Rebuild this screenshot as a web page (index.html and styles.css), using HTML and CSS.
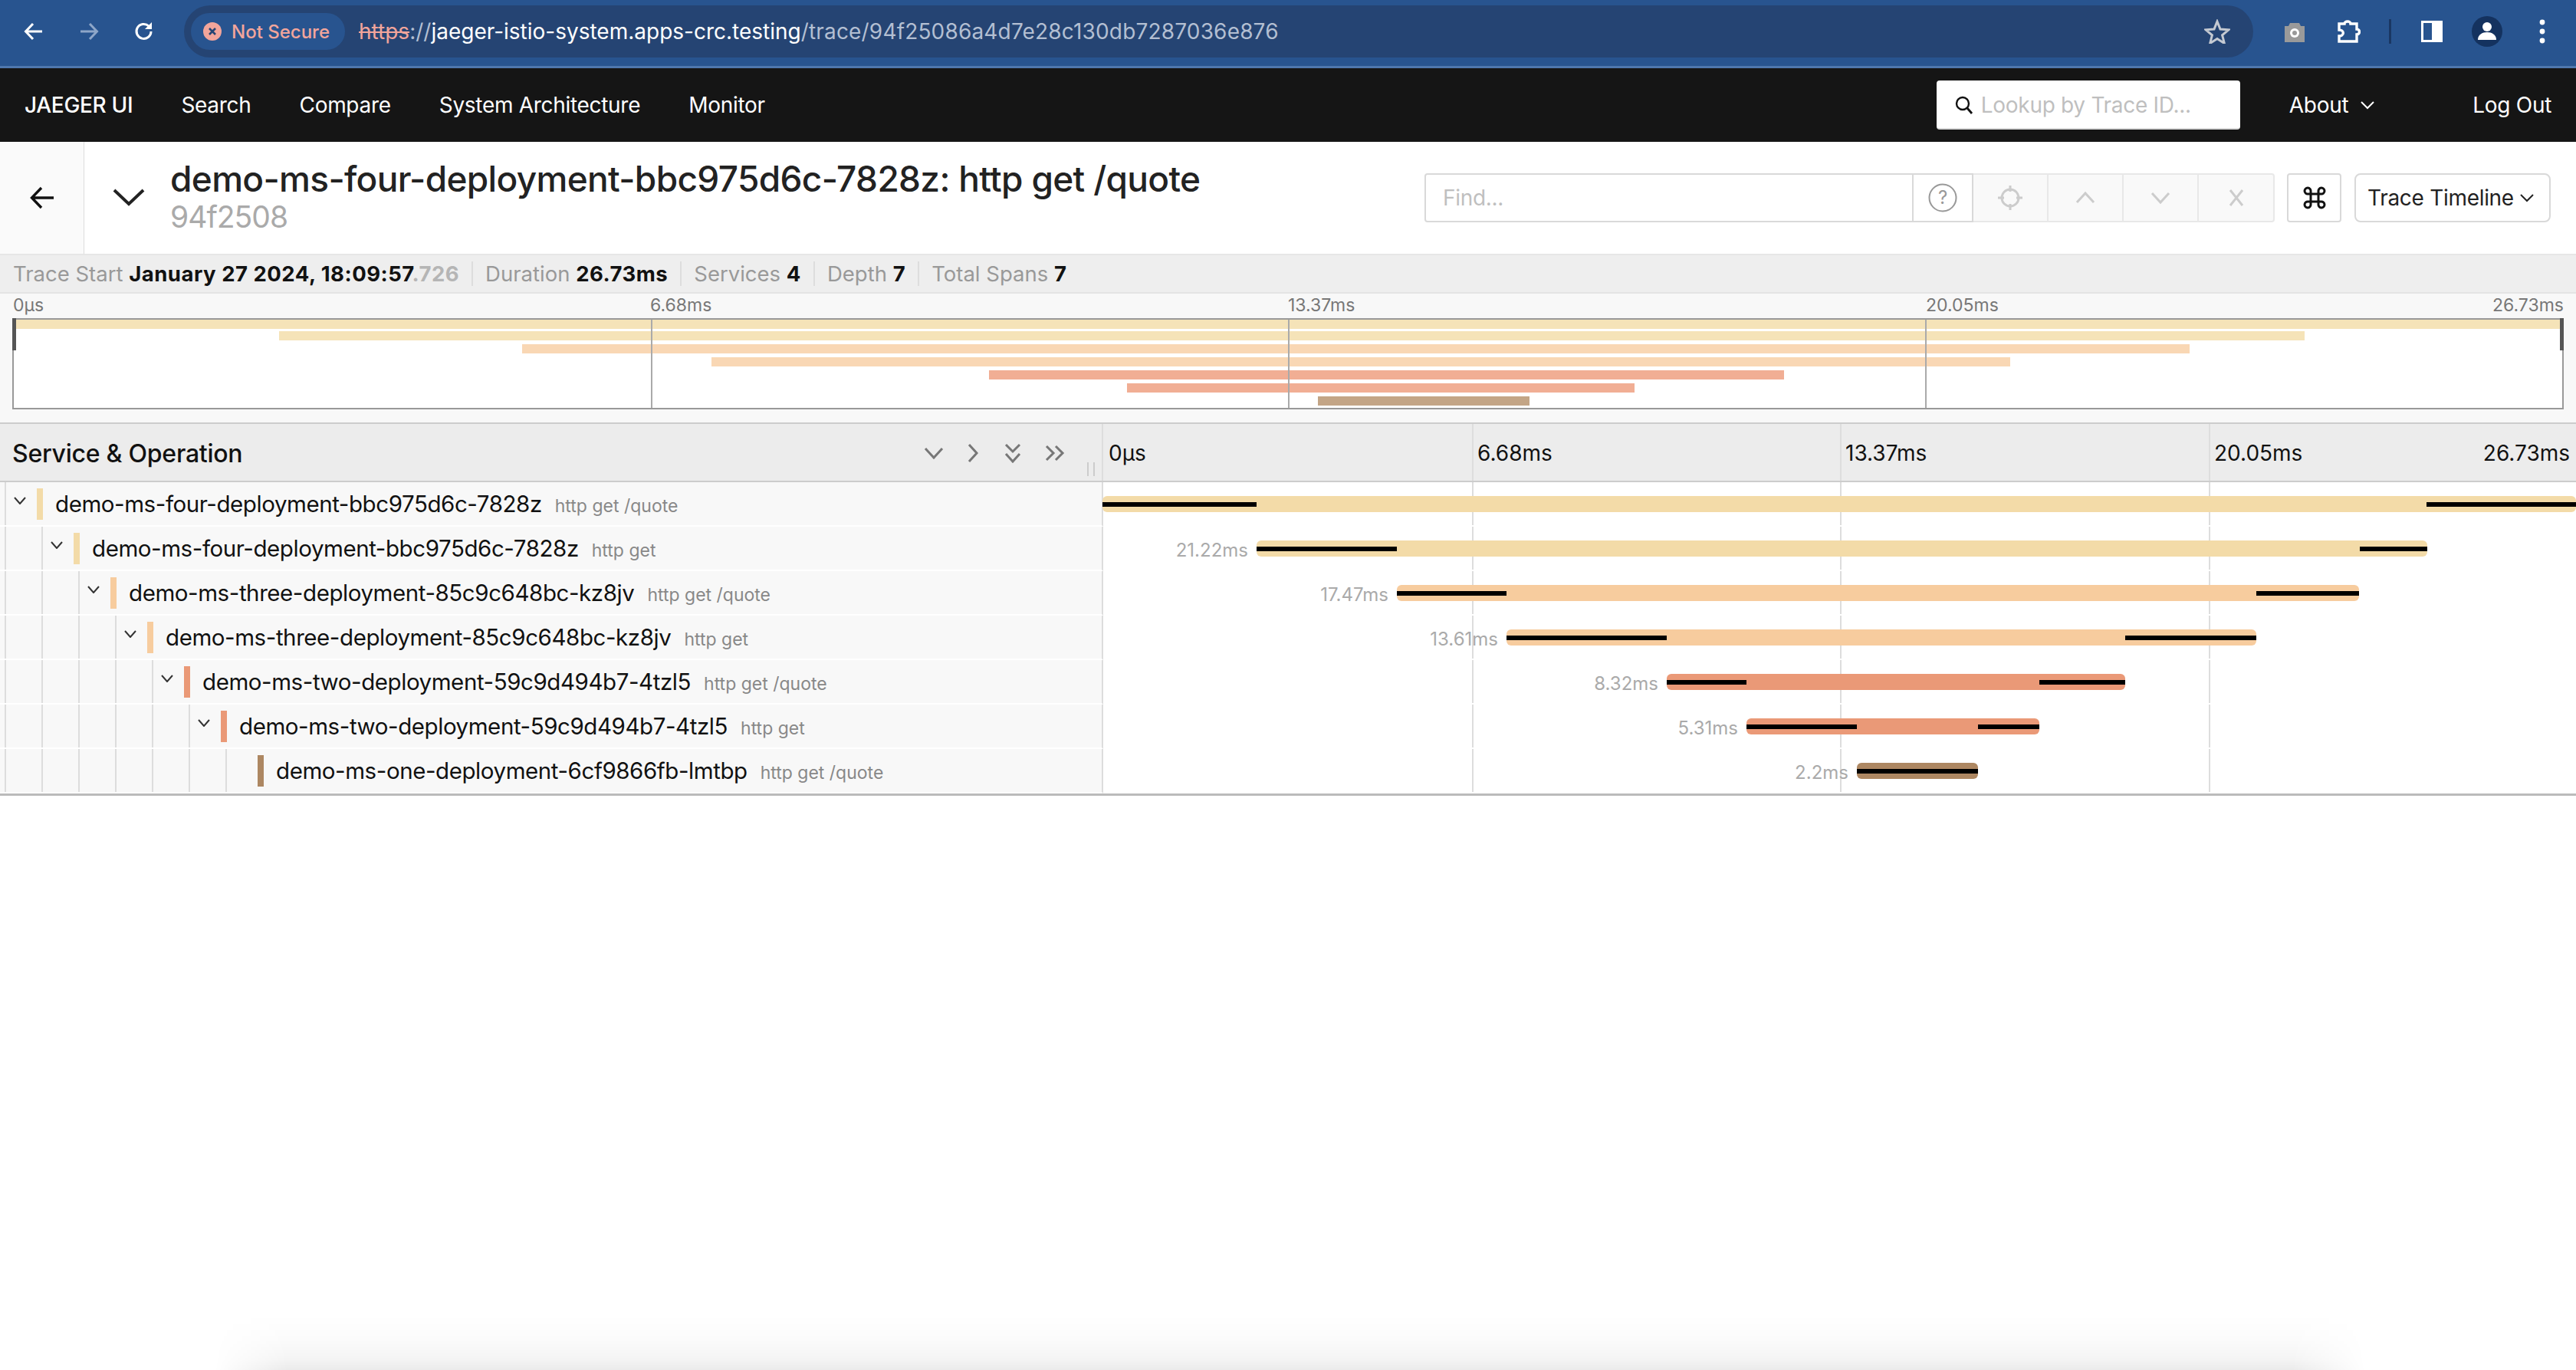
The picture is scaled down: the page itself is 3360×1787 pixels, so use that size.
FILE: index.html
```html
<!DOCTYPE html>
<html lang="en">
<head>
<meta charset="utf-8">
<title>Jaeger UI</title>
<link rel="stylesheet" href="styles.css">
</head>
<body>
<div class="browser">
  <svg class="ci ci-nav" viewBox="0 0 28 28"><path d="M25 14H4M13 4L3.500 14l9.500 10" fill="none" stroke="#fff" stroke-width="3"/></svg>
  <svg class="ci ci-nav dim" viewBox="0 0 28 28"><path d="M3 14h21M15 4l9.500 10L15 24" fill="none" stroke="#8ea6c8" stroke-width="3"/></svg>
  <svg class="ci ci-nav" viewBox="0 0 28 28"><path d="M23 14a9.500 9.500 0 1 1-3-7" fill="none" stroke="#fff" stroke-width="3"/><path d="M24 2v9h-9z" fill="#fff"/></svg>
  <div class="omni">
    <div class="pill">
      <svg class="warn" viewBox="0 0 24 24"><circle cx="12" cy="12" r="12" fill="#f2a59b"/><path d="M8 8l8 8M16 8l-8 8" stroke="#254473" stroke-width="2.600"/></svg>
      <span>Not Secure</span>
    </div>
    <div class="url"><span class="https">https</span><span class="urlgray">://</span><span class="host">jaeger-istio-system.apps-crc.testing</span><span class="urlgray urlpath">/trace/94f25086a4d7e28c130db7287036e876</span></div>
    <svg class="star" viewBox="0 0 34 32"><path d="M17 3l4 10 11 .8-8.400 7 2.700 10.700L17 25.600 7.700 31.500l2.700-10.700L2 13.800 13 13z" fill="none" stroke="#c4c9d1" stroke-width="3"/></svg>
  </div>
  <div class="ext">
    <svg class="i-cam" viewBox="0 0 30 28"><path d="M9 3h12l2 4h5v21H2V7h5z" fill="#9a9a9a"/><circle cx="15" cy="16" r="6" fill="#fff"/><circle cx="15" cy="16" r="3" fill="#9a9a9a"/></svg>
    <svg class="i-puz" viewBox="0 0 32 30"><path d="M4 5h7a4 3 0 0 1 8 0h8v7a3 3 0 0 1 0 7v9H4v-7a4 3 0 0 0 0-8z" fill="none" stroke="#fff" stroke-width="3.400"/></svg>
    <span class="divider"></span>
    <svg class="i-side" viewBox="0 0 28 28"><rect x="1.500" y="1.500" width="25" height="25" fill="none" stroke="#fff" stroke-width="3"/><rect x="14" y="1" width="13" height="26" fill="#fff"/></svg>
    <svg class="i-user" viewBox="0 0 40 40"><circle cx="20" cy="20" r="20" fill="#14325f"/><circle cx="20" cy="14" r="6" fill="#fff"/><path d="M8 31c0-7 6-10 12-10s12 3 12 10z" fill="#fff"/></svg>
    <svg class="i-dots" viewBox="0 0 8 32"><circle cx="4" cy="4" r="3.400" fill="#fff"/><circle cx="4" cy="16" r="3.400" fill="#fff"/><circle cx="4" cy="28" r="3.400" fill="#fff"/></svg>
  </div>
</div>

<nav class="topnav">
  <a class="brand">JAEGER UI</a>
  <a>Search</a>
  <a>Compare</a>
  <a>System Architecture</a>
  <a>Monitor</a>
  <div class="lookup">
    <svg class="mag" viewBox="0 0 24 24"><circle cx="10" cy="10" r="8" fill="none" stroke="#111" stroke-width="2.400"/><path d="M16 16l6 7" stroke="#111" stroke-width="2.800"/></svg>
    <span>Lookup by Trace ID...</span>
  </div>
  <a class="about">About <svg class="nav-chev" viewBox="0 0 18 12"><path d="M1 2l8 8 8-8" fill="none" stroke="#fff" stroke-width="2"/></svg></a>
  <a class="logout">Log Out</a>
</nav>

<header class="tracehead">
  <div class="backcell"><svg class="backarrow" viewBox="0 0 32 30"><path d="M31 15H3M15 2L2.500 15 15 28" fill="none" stroke="#111" stroke-width="3.400"/></svg></div>
  <svg class="collapse" viewBox="0 0 42 24"><path d="M2 3l19 18L40 3" fill="none" stroke="#222" stroke-width="4"/></svg>
  <div class="titles">
    <h1>demo-ms-four-deployment-bbc975d6c-7828z: http get /quote</h1>
    <div class="traceid">94f2508</div>
  </div>
  <div class="tools">
    <div class="find">
      <span class="find-ph">Find...</span>
      <span class="help"><svg viewBox="0 0 38 38"><circle cx="19" cy="19" r="17.500" fill="none" stroke="#999" stroke-width="2"/><text x="19" y="27" text-anchor="middle" class="q">?</text></svg></span>
    </div>
    <div class="btngroup">
      <span class="tb"><svg viewBox="0 0 34 34"><circle cx="17" cy="17" r="11" fill="none" stroke="#ccc" stroke-width="3"/><path d="M17 1v8M17 25v8M1 17h8M25 17h8" stroke="#ccc" stroke-width="3"/></svg></span>
      <span class="tb"><svg viewBox="0 0 34 34"><path d="M6 23L17 11l11 12" fill="none" stroke="#ccc" stroke-width="3"/></svg></span>
      <span class="tb"><svg viewBox="0 0 34 34"><path d="M6 11l11 12 11-12" fill="none" stroke="#ccc" stroke-width="3"/></svg></span>
      <span class="tb"><svg viewBox="0 0 34 34"><path d="M9 7l16 20M25 7L9 27" fill="none" stroke="#ccc" stroke-width="3"/></svg></span>
    </div>
    <span class="cmd"><svg viewBox="0 0 32 32"><path d="M11 11h10v10H11zM11 11H7.500A4 4 0 1 1 11 7.500zM21 11V7.500A4 4 0 1 1 24.500 11zM21 21h3.500a4 4 0 1 1-3.500 3.500zM11 21v3.500A4 4 0 1 1 7.500 21z" fill="none" stroke="#111" stroke-width="3"/></svg></span>
    <span class="viewbtn">Trace Timeline <svg viewBox="0 0 18 12"><path d="M1 2l8 8 8-8" fill="none" stroke="#222" stroke-width="2"/></svg></span>
  </div>
</header>

<section class="summary">
  <span class="sum"><i>Trace Start</i> <b>January 27 2024, 18:09:57</b><b class="ms">.726</b></span>
  <span class="sum"><i>Duration</i> <b>26.73ms</b></span>
  <span class="sum"><i>Services</i> <b>4</b></span>
  <span class="sum"><i>Depth</i> <b>7</b></span>
  <span class="sum"><i>Total Spans</i> <b>7</b></span>
</section>

<section class="overview">
  <div class="ov-labels"><span>0µs</span><span>6.68ms</span><span>13.37ms</span><span>20.05ms</span><span>26.73ms</span></div>
  <div class="ov-canvas">
    <span class="ov-bar c1" style="top:0;left:0;width:100%"></span>
    <span class="ov-bar c1" style="top:15px;left:346px;width:2642px"></span>
    <span class="ov-bar c2" style="top:32px;left:663px;width:2175px"></span>
    <span class="ov-bar c2" style="top:49px;left:910px;width:1694px"></span>
    <span class="ov-bar c3" style="top:66px;left:1272px;width:1037px"></span>
    <span class="ov-bar c3" style="top:83px;left:1452px;width:662px"></span>
    <span class="ov-bar c4" style="top:100px;left:1701px;width:276px"></span>
    <span class="ov-grid" style="left:25%"></span><span class="ov-grid" style="left:50%"></span><span class="ov-grid" style="left:75%"></span>
    <span class="ov-handle left"></span><span class="ov-handle right"></span>
  </div>
</section>

<section class="tl">
  <div class="tl-head">
    <div class="tl-head-left">
      <span class="so">Service &amp; Operation</span>
      <div class="tl-ctl">
        <svg viewBox="0 0 26 16" class="c-a"><path d="M2 2l11 12L24 2" fill="none" stroke="#777" stroke-width="3"/></svg>
        <svg viewBox="0 0 14 26" class="c-b"><path d="M2 2l10 11L2 24" fill="none" stroke="#777" stroke-width="3"/></svg>
        <svg viewBox="0 0 22 26" class="c-c"><path d="M2 2l9 9 9-9M2 14l9 10 9-10" fill="none" stroke="#777" stroke-width="3"/></svg>
        <svg viewBox="0 0 26 22" class="c-d"><path d="M2 2l9 9-9 9M14 2l9 9-9 9" fill="none" stroke="#777" stroke-width="3"/></svg>
      </div>
      <span class="grip"></span>
    </div>
    <div class="tl-head-right">
      <span class="tick" style="left:0">0µs</span>
      <span class="tick" style="left:481px">6.68ms</span>
      <span class="tick" style="left:961px">13.37ms</span>
      <span class="tick" style="left:1442px">20.05ms</span>
      <span class="tick end">26.73ms</span>
    </div>
  </div>

  <div class="row">
    <div class="name d1"><span class="guides"><i></i></span><svg class="tw" viewBox="0 0 16 10"><path d="M1 1l7 8 7-8" fill="none" stroke="#333" stroke-width="2"/></svg><span class="sw c1s"></span><span class="svc">demo-ms-four-deployment-bbc975d6c-7828z</span><span class="op">http get /quote</span></div>
    <div class="track"><span class="bar c1s" style="left:-1px;width:1922px"><span class="lg" style="left:0;width:201px"></span><span class="lg" style="right:0;width:195px"></span></span></div>
  </div>
  <div class="row">
    <div class="name d2"><span class="guides"><i></i><i></i></span><svg class="tw" viewBox="0 0 16 10"><path d="M1 1l7 8 7-8" fill="none" stroke="#333" stroke-width="2"/></svg><span class="sw c1s"></span><span class="svc">demo-ms-four-deployment-bbc975d6c-7828z</span><span class="op">http get</span></div>
    <div class="track"><span class="bar c1s" style="left:200px;width:1527px"><em>21.22ms</em><span class="lg" style="left:0;width:183px"></span><span class="lg" style="right:0;width:88px"></span></span></div>
  </div>
  <div class="row">
    <div class="name d3"><span class="guides"><i></i><i></i><i></i></span><svg class="tw" viewBox="0 0 16 10"><path d="M1 1l7 8 7-8" fill="none" stroke="#333" stroke-width="2"/></svg><span class="sw c2s"></span><span class="svc">demo-ms-three-deployment-85c9c648bc-kz8jv</span><span class="op">http get /quote</span></div>
    <div class="track"><span class="bar c2s" style="left:383px;width:1255px"><em>17.47ms</em><span class="lg" style="left:0;width:143px"></span><span class="lg" style="right:0;width:134px"></span></span></div>
  </div>
  <div class="row">
    <div class="name d4"><span class="guides"><i></i><i></i><i></i><i></i></span><svg class="tw" viewBox="0 0 16 10"><path d="M1 1l7 8 7-8" fill="none" stroke="#333" stroke-width="2"/></svg><span class="sw c2s"></span><span class="svc">demo-ms-three-deployment-85c9c648bc-kz8jv</span><span class="op">http get</span></div>
    <div class="track"><span class="bar c2s" style="left:526px;width:978px"><em>13.61ms</em><span class="lg" style="left:0;width:209px"></span><span class="lg" style="right:0;width:171px"></span></span></div>
  </div>
  <div class="row">
    <div class="name d5"><span class="guides"><i></i><i></i><i></i><i></i><i></i></span><svg class="tw" viewBox="0 0 16 10"><path d="M1 1l7 8 7-8" fill="none" stroke="#333" stroke-width="2"/></svg><span class="sw c3s"></span><span class="svc">demo-ms-two-deployment-59c9d494b7-4tzl5</span><span class="op">http get /quote</span></div>
    <div class="track"><span class="bar c3s" style="left:735px;width:598px"><em>8.32ms</em><span class="lg" style="left:0;width:104px"></span><span class="lg" style="right:0;width:112px"></span></span></div>
  </div>
  <div class="row">
    <div class="name d6"><span class="guides"><i></i><i></i><i></i><i></i><i></i><i></i></span><svg class="tw" viewBox="0 0 16 10"><path d="M1 1l7 8 7-8" fill="none" stroke="#333" stroke-width="2"/></svg><span class="sw c3s"></span><span class="svc">demo-ms-two-deployment-59c9d494b7-4tzl5</span><span class="op">http get</span></div>
    <div class="track"><span class="bar c3s" style="left:839px;width:382px"><em>5.31ms</em><span class="lg" style="left:0;width:144px"></span><span class="lg" style="right:0;width:80px"></span></span></div>
  </div>
  <div class="row">
    <div class="name d7"><span class="guides"><i></i><i></i><i></i><i></i><i></i><i></i><i></i></span><span class="tw-empty"></span><span class="sw c4s"></span><span class="svc">demo-ms-one-deployment-6cf9866fb-lmtbp</span><span class="op">http get /quote</span></div>
    <div class="track"><span class="bar c4s" style="left:983px;width:158px"><em>2.2ms</em><span class="lg" style="left:0;width:100%"></span></span></div>
  </div>
</section>

<div class="window-shadow"></div>
</body>
</html>
```

FILE: styles.css
```css
* { box-sizing: border-box; }
html, body { margin: 0; padding: 0; height: 100%; overflow: hidden; background: #fff; }
body { font-family: Inter, "Liberation Sans", sans-serif; color: #111; position: relative; }
svg { display: block; flex: none; }

/* browser chrome */
.browser { height: 89px; background: #28548f; border-bottom: 3px solid #4f77ad; display: flex; align-items: flex-start; padding: 7px 0 0 30px; }
.ci-nav { width: 28px; height: 28px; margin: 20px 44px 0 0; }
.ci-nav:nth-child(3) { margin-right: 38px; }
.omni { width: 2699px; height: 68px; border-radius: 34px; background: #254473; display: flex; align-items: center; padding: 0 0 0 9px; }
.pill { width: 201px; height: 48px; border-radius: 24px; background: #28548f; display: flex; align-items: center; padding-left: 16px; color: #f2a59b; font-size: 24px; font-weight: 500; }
.warn { width: 24px; height: 24px; margin-right: 13px; }
.url { margin-left: 18px; font-size: 28px; white-space: nowrap; color: #fff; }
.https { color: #f2a59b; text-decoration: line-through; }
.urlgray { color: #b3bfd2; }
.urlpath { letter-spacing: 0.17px; }
.star { width: 34px; height: 32px; margin-left: auto; margin-right: 30px; }
.ext { display: flex; align-items: center; height: 68px; }
.i-cam { width: 30px; height: 28px; margin-left: 39px; }
.i-puz { width: 32px; height: 30px; margin-left: 39px; }
.divider { width: 3px; height: 32px; background: #1a3763; margin-left: 37px; }
.i-side { width: 28px; height: 28px; margin-left: 39px; }
.i-user { width: 40px; height: 40px; margin-left: 38px; }
.i-dots { width: 8px; height: 32px; margin-left: 48px; }

/* top nav */
.topnav { height: 96px; background: #151515; display: flex; align-items: center; gap: 63px; padding: 0 32px; color: #fff; font-size: 28px; letter-spacing: -0.3px; }
.brand { font-weight: 500; }
.lookup { margin-left: auto; margin-right: 1px; width: 396px; height: 64px; background: #fff; border-radius: 4px; border-bottom: 2px solid #d9d9d9; display: flex; align-items: center; padding: 2px 0 0 24px; color: #bfbfbf; }
.mag { width: 24px; height: 26px; margin-right: 10px; }
.about { display: flex; align-items: center; gap: 16px; }
.nav-chev { width: 18px; height: 12px; }
.logout { margin-left: 65px; }

/* trace header */
.tracehead { height: 146px; display: flex; align-items: stretch; background: #fff; }
.backcell { width: 110px; background: #fafafa; border-right: 1px solid #ddd; display: flex; align-items: center; justify-content: center; }
.backarrow { width: 32px; height: 30px; }
.collapse { width: 42px; height: 24px; margin: 60px 33px 0 37px; }
.titles { padding-top: 21px; }
h1 { margin: 0; font-size: 46px; font-weight: 500; line-height: 54px; color: #222; white-space: nowrap; letter-spacing: -0.66px; }
.traceid { font-size: 39px; line-height: 46px; color: #aaa; letter-spacing: -1px; }
.tools { margin-left: auto; display: flex; align-items: center; padding: 0 33px 0 0; }
.find { width: 716px; height: 64px; border: 2px solid #d9d9d9; border-radius: 4px 0 0 4px; display: flex; align-items: center; justify-content: space-between; padding-left: 22px; color: #bfbfbf; font-size: 28px; letter-spacing: -0.3px; }
.help { width: 78px; height: 60px; border-left: 2px solid #d9d9d9; display: flex; align-items: center; justify-content: center; }
.help svg { width: 38px; height: 38px; }
.q { font-family: Inter, sans-serif; font-size: 24px; fill: #999; }
.btngroup { display: flex; height: 64px; border: 2px solid #e8e8e8; border-left: 0; border-radius: 0 4px 4px 0; background: #f9f9f9; }
.tb { width: 98px; display: flex; align-items: center; justify-content: center; border-right: 2px solid #e8e8e8; }
.tb:last-child { border-right: 0; width: 97px; }
.tb svg { width: 34px; height: 34px; }
.cmd { width: 71px; height: 64px; margin-left: 16px; border: 2px solid #d9d9d9; border-radius: 4px; display: flex; align-items: center; justify-content: center; }
.cmd svg { width: 32px; height: 32px; }
.viewbtn { width: 256px; height: 64px; margin-left: 17px; border: 2px solid #d9d9d9; border-radius: 8px; display: flex; align-items: center; justify-content: space-between; padding: 0 20px 0 15px; font-size: 28px; letter-spacing: -0.3px; color: #222; white-space: nowrap; }
.viewbtn svg { width: 18px; height: 12px; }

/* summary */
.summary { height: 50px; background: #eee; border-top: 2px solid #e6e6e6; display: flex; align-items: center; padding-left: 1px; font-size: 27.5px; white-space: nowrap; }
.sum { padding: 0 16px; border-right: 2px solid #ddd; line-height: 32px; }
.sum:last-child { border-right: 0; }
.sum i { font-style: normal; color: #999; }
.sum b { font-weight: 700; color: #111; letter-spacing: 0.5px; }
.sum b.ms { color: #b5b5b5; }

/* overview */
.overview { height: 170px; background: #f8f8f8; border-top: 2px solid #e4e4e4; padding: 0 16px; }
.ov-labels { height: 32px; padding-bottom: 2px; display: grid; grid-template-columns: 832px 832px 832px 1fr auto; align-items: center; font-size: 23px; color: #777; }
.ov-labels span { white-space: nowrap; }
.ov-labels span:nth-child(1) { padding-left: 1px; }
.ov-canvas { position: relative; height: 119px; background: #fff; border: 2px solid #999; }
.ov-grid { position: absolute; top: 0; bottom: 0; width: 2px; background: #aaa; }
.ov-bar { position: absolute; height: 12px; }
.ov-bar.c1 { background: #f5e3b8; }
.ov-bar.c2 { background: #f9d7b4; }
.ov-bar.c3 { background: #f1ae94; }
.ov-bar.c4 { background: #c3a586; }
.ov-handle { position: absolute; top: -2px; width: 5px; height: 42px; background: #555; }
.ov-handle.left { left: -2px; }
.ov-handle.right { right: -2px; }

/* timeline */
.tl { border-top: 2px solid #ccc; border-bottom: 3px solid #bbb; }
.tl-head { height: 76px; display: grid; grid-template-columns: 1439px 1fr; background: #ececec; border-bottom: 2px solid #ccc; }
.tl-head-left { position: relative; display: flex; align-items: center; padding-left: 16px; border-right: 2px solid #ddd; }
.so { font-size: 32px; font-weight: 500; color: #111; letter-spacing: -0.25px; margin-top: 2px; }
.tl-ctl { position: absolute; inset: 0; }
.tl-ctl svg { position: absolute; }
.c-a { left: 1205px; top: 30px; width: 26px; height: 16px; }
.c-b { left: 1262px; top: 25px; width: 14px; height: 26px; }
.c-c { left: 1310px; top: 25px; width: 22px; height: 26px; }
.c-d { left: 1363px; top: 27px; width: 26px; height: 22px; }
.grip { position: absolute; left: 1418px; top: 50px; width: 10px; height: 18px; border-left: 2px solid #ccc; border-right: 2px solid #ccc; }
.tl-head-right { position: relative; font-size: 28px; color: #111; }
.tick { position: absolute; top: 0; height: 74px; display: flex; align-items: center; padding: 2px 0 0 5px; border-left: 2px solid #ddd; white-space: nowrap; }
.tick:first-child { border-left: 0; padding-left: 7px; }
.tick.end { right: 8px; border: 0; }

.row { height: 58px; display: grid; grid-template-columns: 1439px 1fr; }
.name { position: relative; display: flex; align-items: center; background: #f8f8f8; border-right: 2px solid #ddd; border-bottom: 2px solid #fff; white-space: nowrap; }
.guides { position: absolute; inset: 0 auto 0 0; display: flex; padding-left: 6px; gap: 46px; }
.guides i { width: 2px; background: #ddd; }
.tw { width: 16px; height: 10px; margin: -8px 0 0 var(--tw); }
.tw-empty { width: 16px; height: 10px; margin-left: var(--tw); }
.sw { width: 8px; height: 41px; margin-left: 14px; }
.d1 { --tw: 18px; }
.d2 { --tw: 66px; }
.d3 { --tw: 114px; }
.d4 { --tw: 162px; }
.d5 { --tw: 210px; }
.d6 { --tw: 258px; }
.d7 { --tw: 306px; }
.svc { margin-left: 16px; font-size: 29.5px; letter-spacing: -0.43px; color: #111; }
.op { margin-left: 17px; margin-top: 6px; font-size: 23px; color: #888; }
.c1s { background: #f3dba8; }
.c2s { background: #f7cc9e; }
.c3s { background: #ea9977; }
.c4s { background: #ad8762; }

.track { position: relative; background: linear-gradient(#ddd, #ddd) 481px 0 / 2px 56px no-repeat, linear-gradient(#ddd, #ddd) 961px 0 / 2px 56px no-repeat, linear-gradient(#ddd, #ddd) 1442px 0 / 2px 56px no-repeat; }
.bar { position: absolute; top: 18px; height: 21px; border-radius: 6px; }
.lg { position: absolute; top: 8px; height: 6px; background: #000; }
.bar em { position: absolute; right: calc(100% + 11px); top: 1px; font-style: normal; font-size: 24px; color: #aaa; white-space: nowrap; line-height: 24px; }

.window-shadow { position: fixed; left: 280px; right: 275px; bottom: 0; height: 72px; background: linear-gradient(rgba(0,0,0,0), rgba(0,0,0,.015) 45%, rgba(0,0,0,.04) 78%, rgba(0,0,0,.08)); -webkit-mask-image: linear-gradient(to right, transparent, #000 95px, #000 calc(100% - 95px), transparent); mask-image: linear-gradient(to right, transparent, #000 95px, #000 calc(100% - 95px), transparent); }
```
